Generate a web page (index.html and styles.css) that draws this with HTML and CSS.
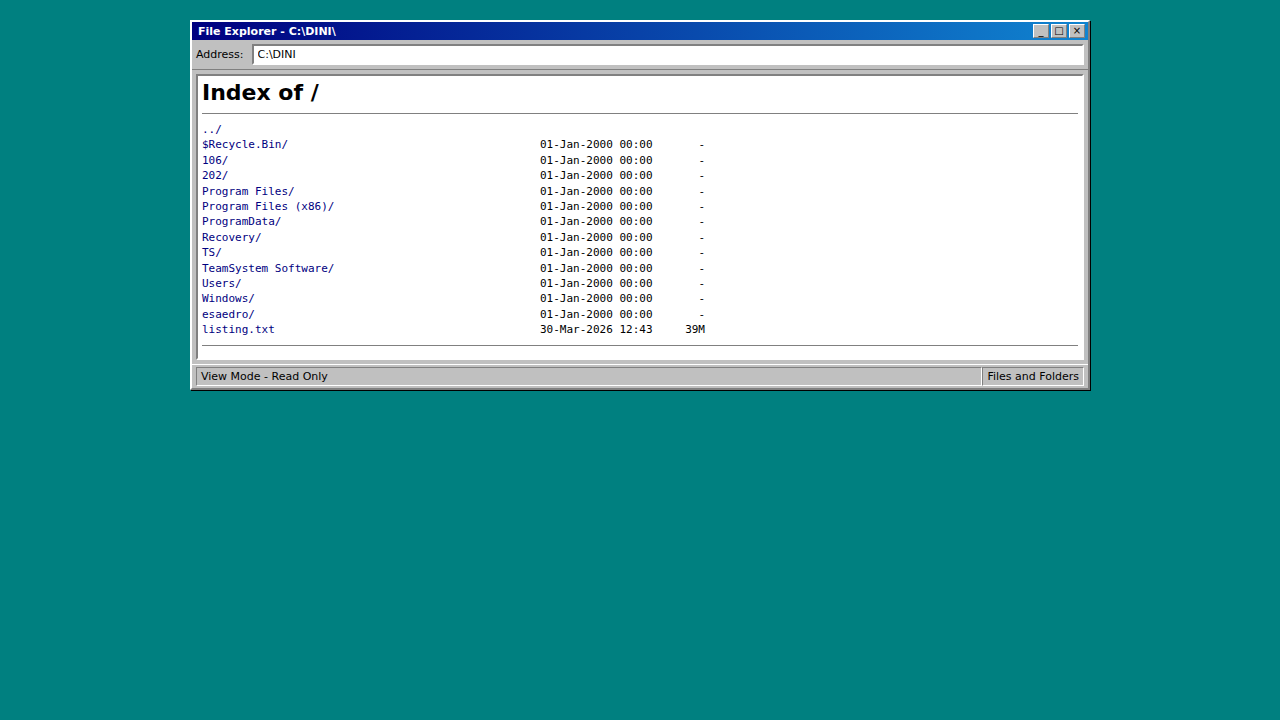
FILE: index.html
```html
<!DOCTYPE html>
<html lang="en">
  <head>
    <meta charset="UTF-8" />
    <meta name="viewport" content="width=device-width, initial-scale=1.0" />
    <title>File Explorer - C:\DINI\</title>
    <link rel="stylesheet" href="styles.css">
  </head>
  <body>
    <div class="window">
      <div class="title-bar">
        <div class="title-text">File Explorer - C:\DINI\</div>
        <div class="title-buttons">
          <button type="button">_</button>
          <button type="button">□</button>
          <button type="button">×</button>
        </div>
      </div>

      <div class="toolbar">
        <label for="address">Address:</label>
        <input type="text" id="address" class="address" value="C:\DINI" readonly />
      </div>

      <div class="content">
        <h1>Index of /</h1>
        <hr />
        <table class="listing">
          <tr><td class="name"><a href="../">../</a></td><td class="date"></td><td class="size"></td></tr>
          <tr><td><a href="#">$Recycle.Bin/</a></td><td>01-Jan-2000 00:00</td><td class="size">-</td></tr>
          <tr><td><a href="#">106/</a></td><td>01-Jan-2000 00:00</td><td class="size">-</td></tr>
          <tr><td><a href="#">202/</a></td><td>01-Jan-2000 00:00</td><td class="size">-</td></tr>
          <tr><td><a href="#">Program Files/</a></td><td>01-Jan-2000 00:00</td><td class="size">-</td></tr>
          <tr><td><a href="#">Program Files (x86)/</a></td><td>01-Jan-2000 00:00</td><td class="size">-</td></tr>
          <tr><td><a href="#">ProgramData/</a></td><td>01-Jan-2000 00:00</td><td class="size">-</td></tr>
          <tr><td><a href="#">Recovery/</a></td><td>01-Jan-2000 00:00</td><td class="size">-</td></tr>
          <tr><td><a href="#">TS/</a></td><td>01-Jan-2000 00:00</td><td class="size">-</td></tr>
          <tr><td><a href="#">TeamSystem Software/</a></td><td>01-Jan-2000 00:00</td><td class="size">-</td></tr>
          <tr><td><a href="#">Users/</a></td><td>01-Jan-2000 00:00</td><td class="size">-</td></tr>
          <tr><td><a href="#">Windows/</a></td><td>01-Jan-2000 00:00</td><td class="size">-</td></tr>
          <tr><td><a href="#">esaedro/</a></td><td>01-Jan-2000 00:00</td><td class="size">-</td></tr>
          <tr><td><a href="#">listing.txt</a></td><td>30-Mar-2026 12:43</td><td class="size">39M</td></tr>
        </table>
        <hr />
      </div>

      <div class="status-bar">
        <div class="status-panel status-main">View Mode - Read Only</div>
        <div class="status-panel">Files and Folders</div>
      </div>
    </div>
  </body>
</html>
```

FILE: styles.css
```css
* {
  box-sizing: border-box;
}
body {
  margin: 0;
  padding: 20px;
  background-color: #008080;
  color: #000;
  font-family: "DejaVu Sans", Verdana, sans-serif;
  font-size: 11px;
  line-height: 1.4;
}
.window {
  max-width: 900px;
  margin: 0 auto;
  background-color: #c0c0c0;
  border: 2px solid;
  border-color: #fff #808080 #808080 #fff;
  box-shadow: 1px 1px 0 #000;
}
.title-bar {
  display: flex;
  justify-content: space-between;
  align-items: flex-start;
  padding: 2px 3px 0 6px;
  background: linear-gradient(90deg, #000080, #1084d0);
  color: #fff;
  font-weight: bold;
  line-height: 16px;
}
.title-buttons {
  display: flex;
  gap: 2px;
}
.title-buttons button {
  display: flex;
  align-items: center;
  justify-content: center;
  width: 16px;
  height: 14px;
  padding: 0;
  background-color: #c0c0c0;
  border: 1px solid;
  border-color: #fff #808080 #808080 #fff;
  color: #000;
  font-family: inherit;
  font-size: 10px;
  line-height: 12px;
}
.toolbar {
  display: flex;
  align-items: center;
  gap: 8px;
  padding: 4px;
  border-bottom: 1px solid #808080;
}
.address {
  flex: 1;
  min-width: 0;
  height: 21px;
  padding: 1px 4px;
  background-color: #fff;
  border: 2px solid;
  border-color: #808080 #fff #fff #808080;
  border-radius: 0;
  color: #000;
  font: inherit;
}
.content {
  margin: 4px;
  padding: 4px;
  background-color: #fff;
  border: 2px solid;
  border-color: #808080 #fff #fff #808080;
  overflow-x: auto;
}
h1 {
  margin: 0;
  font-size: 22px;
  line-height: 25px;
}
hr {
  margin: 8px 0;
  border: none;
  border-top: 1px solid #808080;
}
.listing {
  border-collapse: collapse;
  font-family: "DejaVu Sans Mono", monospace;
  white-space: nowrap;
}
.listing td {
  padding: 0;
}
.listing a {
  color: #000080;
  text-decoration: none;
}
.listing a:hover {
  text-decoration: underline;
}
.name {
  width: 338px;
}
.date {
  width: 113px;
}
.size {
  width: 52px;
  text-align: right;
}
.status-bar {
  display: flex;
  padding: 2px 4px;
  border-top: 1px solid #fff;
  line-height: 15px;
}
.status-panel {
  padding: 1px 4px;
  border: 1px solid;
  border-color: #808080 #fff #fff #808080;
}
.status-main {
  flex: 1;
}
```
